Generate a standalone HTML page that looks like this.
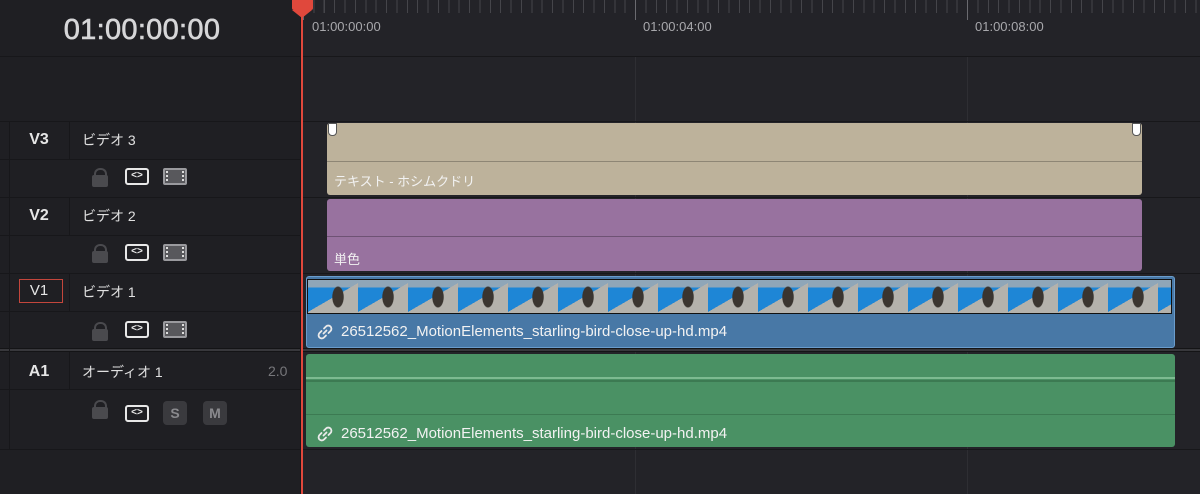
<!DOCTYPE html>
<html><head><meta charset="utf-8"><style>
*{margin:0;padding:0;box-sizing:border-box}
body{width:1200px;height:494px;background:#232328;position:relative;overflow:hidden;font-family:"Liberation Sans","Noto Sans CJK JP",sans-serif;color:#d8d8d8}
.a{position:absolute}
.hl{position:absolute;left:0;width:1200px;height:1px;background:#17171a}
.vl{position:absolute;width:1px;background:#17171a}
.lbl{position:absolute;left:9px;width:60px;text-align:center;font-weight:bold;font-size:16px;color:#e6e6e6}
.nm{position:absolute;left:82px;font-size:14px;color:#e0e0e0}
.lock{position:absolute;width:16px;height:12px;background:#4a4a4e;border-radius:2px}
.lock:before{content:"";position:absolute;left:2px;top:-7px;width:9px;height:9px;border:2px solid #4a4a4e;border-bottom:none;border-radius:6px 6px 0 0}
.ar{position:absolute;width:24px;height:17px;border:2px solid #e8e8e8;border-radius:3px;font-size:10px;line-height:12px;text-align:center;color:#eee;font-weight:bold}
.film{position:absolute;width:24px;height:17px;background:#58585c;border:2px solid #9a9a9e;border-radius:2px}
.film:before,.film:after{content:"";position:absolute;top:1px;width:2px;height:11px;background:repeating-linear-gradient(#ddd 0 2px,transparent 2px 4px)}
.film:before{left:1px}.film:after{right:1px}
.sm{position:absolute;width:24px;height:24px;background:#3a3a3e;border-radius:4px;color:#8a8a8e;font-size:14px;text-align:center;line-height:24px;font-weight:bold}
.clipt{position:absolute;font-size:13px;color:#f2f2f2}
</style></head><body>
<div class="a" style="left:0;top:0;width:302px;height:494px;background:#1f1f23"></div>
<div class="a" style="left:0;top:0;width:300px;height:56px;text-align:center;font-size:29px;line-height:60px;color:#d6d6d8;-webkit-text-stroke:0.6px #d6d6d8"><span style="position:relative;left:-8px;letter-spacing:0.3px">01:00:00:00</span></div>
<div class="a" style="left:303px;top:0;width:897px;height:13px;background:repeating-linear-gradient(90deg,#45454a 0 1px,transparent 1px 10.375px)"></div>
<div class="a" style="left:303px;top:0;width:897px;height:20px;background:repeating-linear-gradient(90deg,#6a6a6f 0 1px,transparent 1px 332px)"></div>
<div class="a" style="left:312px;top:19px;font-size:13px;color:#a8a8ac">01:00:00:00</div>
<div class="a" style="left:643px;top:19px;font-size:13px;color:#a8a8ac">01:00:04:00</div>
<div class="a" style="left:975px;top:19px;font-size:13px;color:#a8a8ac">01:00:08:00</div>
<div class="hl" style="top:56px"></div>
<div class="a" style="left:635px;top:57px;width:1px;height:437px;background:#2e2e33"></div>
<div class="a" style="left:967px;top:57px;width:1px;height:437px;background:#2e2e33"></div>
<div class="hl" style="top:121px"></div>
<div class="hl" style="top:159px;width:300px"></div>
<div class="hl" style="top:197px"></div>
<div class="hl" style="top:235px;width:300px"></div>
<div class="hl" style="top:273px"></div>
<div class="hl" style="top:311px;width:300px"></div>
<div class="a" style="left:0;top:348px;width:1200px;height:4px;background:#38383c;border-top:1px solid #141416;border-bottom:1px solid #141416"></div>
<div class="hl" style="top:389px;width:300px"></div>
<div class="hl" style="top:449px"></div>
<div class="vl" style="left:9px;top:121px;height:328px"></div>
<div class="vl" style="left:69px;top:121px;height:38px"></div>
<div class="vl" style="left:69px;top:197px;height:38px"></div>
<div class="vl" style="left:69px;top:273px;height:38px"></div>
<div class="vl" style="left:69px;top:352px;height:37px"></div>
<div class="vl" style="left:300px;top:0;height:494px"></div>
<div class="lbl" style="top:131px">V3</div><div class="nm" style="top:130px">ビデオ 3</div>
<div class="lbl" style="top:207px">V2</div><div class="nm" style="top:206px">ビデオ 2</div>
<div class="a" style="left:19px;top:279px;width:44px;height:24px;border:1px solid #c4463c"></div>
<div class="lbl" style="top:282px;font-weight:normal;font-size:15px">V1</div><div class="nm" style="top:282px">ビデオ 1</div>
<div class="lbl" style="top:363px">A1</div><div class="nm" style="top:362px">オーディオ 1</div>
<div class="a" style="left:268px;top:363px;font-size:14px;color:#77777b">2.0</div>
<div class="lock" style="left:92px;top:175px"></div><div class="ar" style="left:125px;top:168px">&lt;&gt;</div><div class="film" style="left:163px;top:168px"></div>
<div class="lock" style="left:92px;top:251px"></div><div class="ar" style="left:125px;top:244px">&lt;&gt;</div><div class="film" style="left:163px;top:244px"></div>
<div class="lock" style="left:92px;top:329px"></div><div class="ar" style="left:125px;top:321px">&lt;&gt;</div><div class="film" style="left:163px;top:321px"></div>
<div class="lock" style="left:92px;top:407px"></div><div class="ar" style="left:125px;top:405px">&lt;&gt;</div><div class="sm" style="left:163px;top:401px">S</div><div class="sm" style="left:203px;top:401px">M</div>
<div class="a" style="left:327px;top:123px;width:815px;height:72px;background:#bdb29b;border-radius:3px"></div>
<div class="a" style="left:327px;top:161px;width:815px;height:1px;background:#8e8675"></div>
<div class="a" style="left:328px;top:123px;width:9px;height:13px;background:#fff;border-radius:0 0 4px 4px;border:1px solid #555"></div>
<div class="a" style="left:1132px;top:123px;width:9px;height:13px;background:#fff;border-radius:0 0 4px 4px;border:1px solid #555"></div>
<div class="clipt" style="left:334px;top:171px">テキスト - ホシムクドリ</div>
<div class="a" style="left:327px;top:199px;width:815px;height:72px;background:#98729f;border-radius:3px"></div>
<div class="a" style="left:327px;top:236px;width:815px;height:1px;background:#6e5274"></div>
<div class="clipt" style="left:334px;top:249px">単色</div>
<div class="a" style="left:306px;top:276px;width:869px;height:72px;background:#4878a6;border-radius:3px;border:1px solid #6a9ccc"></div>
<div class="a" style="left:307px;top:279px;width:865px;height:35px;border:1px solid #111;background:
radial-gradient(ellipse 6px 11px at 30px 17px,#3a3530 0 90%,transparent 100%) 0 0/50px 35px,
linear-gradient(150deg,transparent 0 50%,#b4b2ac 50%) 0 0/50px 35px,
linear-gradient(#8fa6b8 0 22%,#1e86d6 22% 100%) 0 0/50px 35px"></div>
<svg class="a" style="left:316px;top:323px" width="18" height="18" viewBox="0 0 18 18" fill="none" stroke="#eaeaea" stroke-width="1.8" stroke-linecap="round"><path d="M7.5 10.5 L10.5 7.5"/><path d="M8 5.5 L10 3.5 a3 3 0 0 1 4.5 4.5 L12.5 10"/><path d="M10 12.5 L8 14.5 a3 3 0 0 1 -4.5 -4.5 L5.5 8"/></svg>
<div class="clipt" style="left:341px;top:323px;font-size:15px">26512562_MotionElements_starling-bird-close-up-hd.mp4</div>
<div class="a" style="left:306px;top:354px;width:869px;height:93px;background:#4a9164;border-radius:3px"></div>
<div class="a" style="left:306px;top:377px;width:869px;height:2px;background:#7dbb91"></div>
<div class="a" style="left:306px;top:380px;width:869px;height:2px;background:#3c7a52"></div>
<div class="a" style="left:306px;top:414px;width:869px;height:1px;background:#3c7a52"></div>
<svg class="a" style="left:316px;top:425px" width="18" height="18" viewBox="0 0 18 18" fill="none" stroke="#eaeaea" stroke-width="1.8" stroke-linecap="round"><path d="M7.5 10.5 L10.5 7.5"/><path d="M8 5.5 L10 3.5 a3 3 0 0 1 4.5 4.5 L12.5 10"/><path d="M10 12.5 L8 14.5 a3 3 0 0 1 -4.5 -4.5 L5.5 8"/></svg>
<div class="clipt" style="left:341px;top:425px;font-size:15px">26512562_MotionElements_starling-bird-close-up-hd.mp4</div>
<div class="a" style="left:301px;top:0;width:2px;height:494px;background:#e0483c"></div>
<div class="a" style="left:292px;top:0;width:21px;height:10px;background:#e0483c;border-radius:0 0 2px 2px"></div>
<div class="a" style="left:292px;top:10px;width:0;height:0;border-left:10.5px solid transparent;border-right:10.5px solid transparent;border-top:8px solid #e0483c"></div>
</body></html>
